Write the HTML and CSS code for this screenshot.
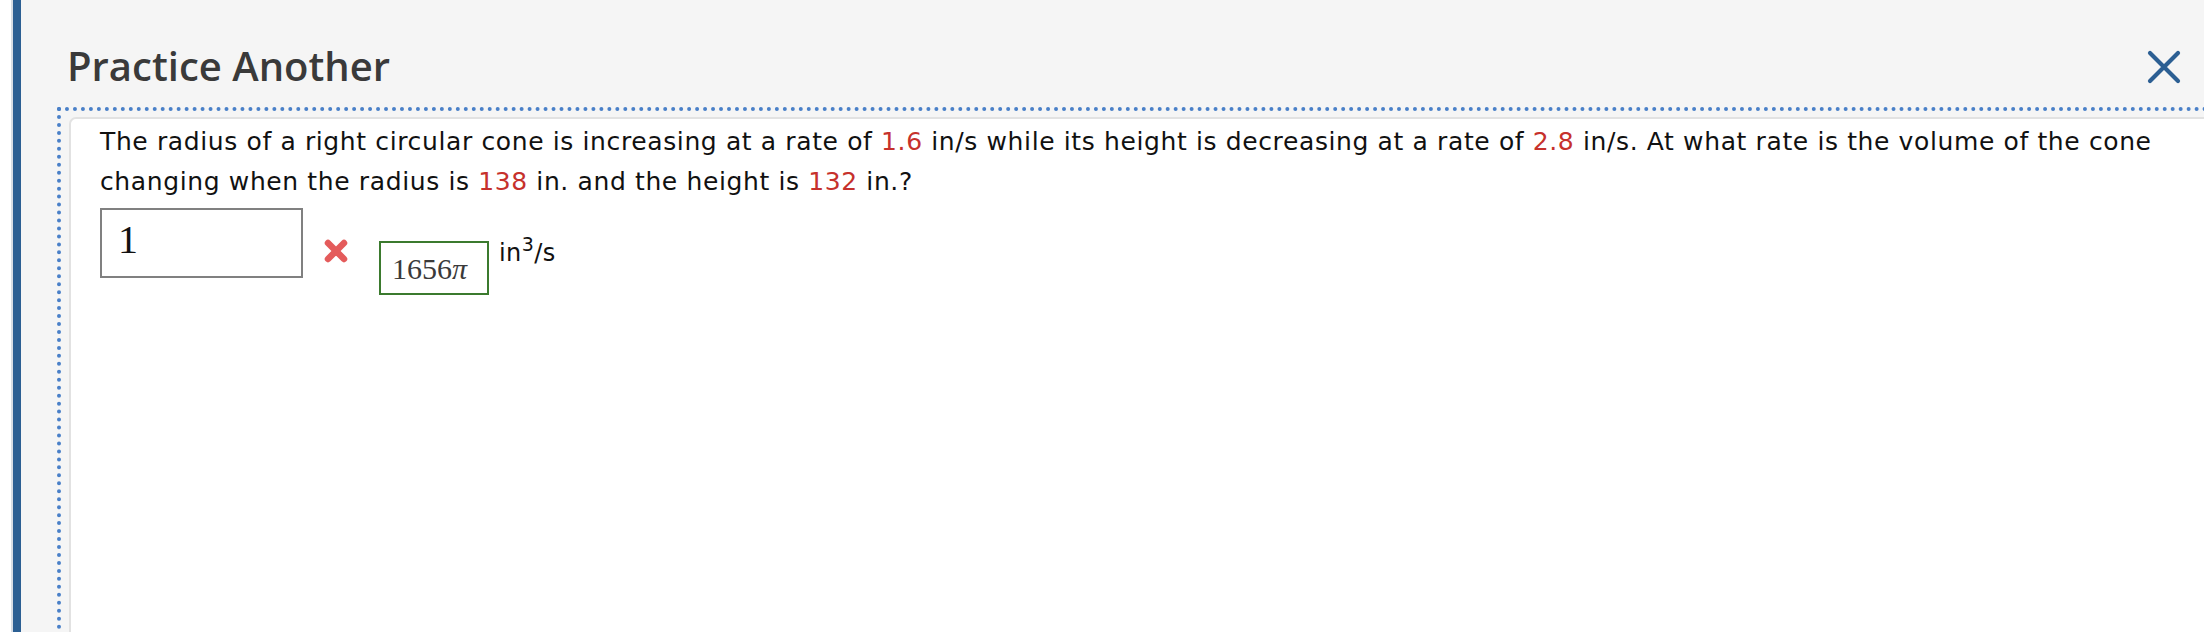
FILE: index.html
```html
<!DOCTYPE html>
<html lang="en">
<head>
<meta charset="utf-8">
<title>Practice Another</title>
<link rel="stylesheet" href="styles.css">
</head>
<body>
<div class="page">
  <div class="edge"></div>
  <div class="rail"></div>
  <div class="main">
    <header class="head">
      <h1 class="title">Practice Another</h1>
      <svg class="close" width="34" height="34" viewBox="0 0 34 34" aria-label="Close">
        <path d="M3 3 L31 31 M31 3 L3 31" stroke="#2c5f93" stroke-width="4.2" stroke-linecap="round" fill="none"/>
      </svg>
    </header>
    <div class="focus">
      <div class="panel">
        <p class="question">The radius of a right circular cone is increasing at a rate of <span class="num">1.6</span> in/s while its height is decreasing at a rate of <span class="num">2.8</span> in/s. At what rate is the volume of the cone changing when the radius is <span class="num">138</span> in. and the height is <span class="num">132</span> in.?</p>
        <div class="answer">
          <div class="field">1</div>
          <svg class="wrong" width="26" height="26" viewBox="0 0 26 26" aria-label="Incorrect">
            <path d="M5 5 L21 21 M21 5 L5 21" stroke="#e45b5b" stroke-width="6.5" stroke-linecap="round" fill="none"/>
          </svg>
          <div class="correct">1656<i>π</i></div>
          <div class="units">in<sup>3</sup>/s</div>
        </div>
      </div>
    </div>
  </div>
</div>
</body>
</html>
```
FILE: styles.css
```css
html, body {
  margin: 0;
  padding: 0;
  background: #ffffff;
}
.page {
  display: flex;
  height: 632px;
  overflow: hidden;
}
.edge {
  width: 11px;
  flex: none;
  background: #ffffff;
}
.rail {
  width: 8px;
  flex: none;
  border-left: 2px solid #d8dde5;
  background: #2c5f93;
}
.main {
  flex: 1;
  min-width: 0;
  background: #f5f5f5;
  padding-left: 36px;
  overflow: hidden;
}
.head {
  display: flex;
  justify-content: space-between;
  align-items: flex-start;
  padding-top: 39px;
  margin-bottom: 14px;
}
.title {
  margin: 0 0 0 10px;
  font-family: "Open Sans", "Noto Sans", sans-serif;
  font-weight: 600;
  font-size: 40px;
  line-height: 54px;
  color: #3a3a3a;
}
.close {
  display: block;
  margin-top: 11px;
  margin-right: 23px;
}
.focus {
  width: 2300px;
  height: 600px;
  border-top: 4px dotted #4a80c8;
  border-left: 4px dotted #4a80c8;
  padding: 6px 0 0 8px;
}
.panel {
  height: 560px;
  background: #ffffff;
  border: 2px solid #e2e2e2;
  border-top-left-radius: 7px;
  padding: 3px 0 0 29px;
}
.question {
  margin: 0;
  width: 2080px;
  font-family: Verdana, "DejaVu Sans", sans-serif;
  font-size: 25px;
  letter-spacing: 0.62px;
  line-height: 40px;
  color: #111111;
}
.num {
  color: #c6312c;
}
.answer {
  display: flex;
  align-items: flex-start;
  margin-top: 6px;
}
.field {
  box-sizing: border-box;
  width: 203px;
  height: 70px;
  border: 2px solid #808080;
  background: #ffffff;
  padding: 2px 0 0 16px;
  font-family: "Liberation Serif", "Times New Roman", serif;
  font-size: 40px;
  line-height: 56px;
  color: #111111;
}
.wrong {
  display: block;
  margin: 30px 0 0 20px;
}
.correct {
  box-sizing: border-box;
  width: 110px;
  height: 54px;
  margin: 33px 0 0 30px;
  border: 2px solid #3b7a2e;
  padding: 6px 0 0 11px;
  font-family: "Liberation Serif", "Times New Roman", serif;
  font-size: 30px;
  line-height: 40px;
  color: #3a3a3a;
  white-space: nowrap;
}
.units {
  margin: 25px 0 0 10px;
  font-family: Verdana, "DejaVu Sans", sans-serif;
  font-size: 24px;
  letter-spacing: 0.4px;
  line-height: 40px;
  color: #111111;
}
.units sup {
  font-size: 19px;
  line-height: 0;
  vertical-align: 10px;
}
```
